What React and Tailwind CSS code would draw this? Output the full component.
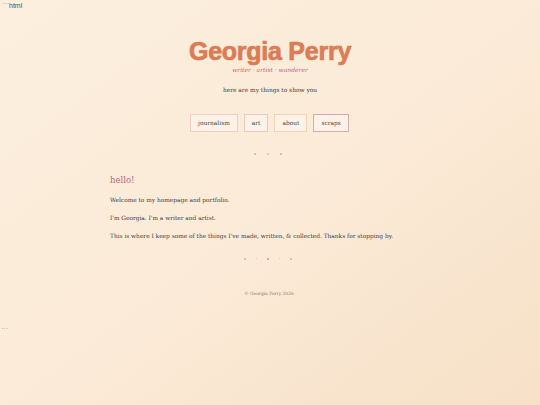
import React from 'react';

const serif = { fontFamily: '"DejaVu Serif", Georgia, serif' };
const sans = { fontFamily: '"Liberation Sans", Arial, sans-serif' };

const links = [
  { label: 'journalism', border: 'border-[#f0cfc8]' },
  { label: 'art', border: 'border-[#e2cbc6]' },
  { label: 'about', border: 'border-[#f3d2b6]' },
  { label: 'scraps', border: 'border-[#d7aab0]' },
];

function Dots({ small }) {
  if (small) {
    return (
      <div className="flex items-center justify-center gap-[10px] h-[6px] mr-[4px]">
        <span className="w-[2px] h-[2px] rounded-full bg-[#cdb3bd]" />
        <span className="w-[1px] h-[1px] rounded-full bg-[#d8c2c6]" />
        <span className="w-[2px] h-[2px] rounded-full bg-[#b89aaa]" />
        <span className="w-[1px] h-[1px] rounded-full bg-[#d8c2c6]" />
        <span className="w-[2px] h-[2px] rounded-full bg-[#cdb3bd]" />
      </div>
    );
  }
  return (
    <div className="flex items-center justify-center gap-[11px] h-[6px] mr-[4px]">
      <span className="w-[2px] h-[2px] rounded-full bg-[#c7aeb8]" />
      <span className="w-[2px] h-[2px] rounded-full bg-[#d6c0c4]" />
      <span className="w-[2px] h-[2px] rounded-full bg-[#c7aeb8]" />
    </div>
  );
}

export default function App() {
  return (
    <div className="w-[540px] h-[405px] overflow-hidden bg-gradient-to-br from-[#fcefde] via-[#fbebd8] to-[#f7e0c7] text-[#3f3a3a]">
      <div className="text-[7px] leading-[10px] text-[#555] pl-[2px] pt-[1px]" style={sans}>
        <span className="text-[#888]">```</span>html
      </div>

      <header className="flex flex-col items-center mt-[26px]">
        <h1
          className="text-[25px] leading-[28px] font-bold text-[#dc7c54] tracking-[-0.25px] [-webkit-text-stroke:0.7px_#dc7c54]"
          style={sans}
        >
          Georgia Perry
        </h1>
        <p className="mt-[1px] text-[6px] leading-[8px] italic text-[#c4627c]" style={serif}>
          writer · artist · wanderer
        </p>
        <p className="mt-[12px] text-[5.9px] leading-[9px] text-[#3f3a3a]" style={serif}>
          here are my things to show you
        </p>
        <nav className="flex gap-[6px] mt-[19px] mr-[1px]">
          {links.map((l) => (
            <a
              key={l.label}
              className={`h-[18px] px-[7px] flex items-center border ${l.border} bg-[#fcf2e8] text-[5.9px] text-[#4a4242]`}
              style={serif}
            >
              {l.label}
            </a>
          ))}
        </nav>
        <div className="mt-[19px]">
          <Dots />
        </div>
      </header>

      <main className="w-[320px] mx-auto mt-[17px]" style={serif}>
        <h2 className="text-[8.5px] leading-[12px] text-[#c4627c]">hello!</h2>
        <p className="mt-[10px] text-[5.85px] leading-[9px]">Welcome to my homepage and portfolio.</p>
        <p className="mt-[9px] text-[5.85px] leading-[9px]">I'm Georgia. I'm a writer and artist.</p>
        <p className="mt-[8.5px] text-[5.85px] leading-[9px]">
          This is where I keep some of the things I've made, written, &amp; collected. Thanks for stopping by.
        </p>
      </main>

      <div className="mt-[15px]">
        <Dots small />
      </div>

      <footer className="mt-[28px] text-center text-[4.4px] leading-[7px] text-[#8a7a72] mr-[2px]" style={serif}>
        © Georgia Perry 2026
      </footer>

      <div className="mt-[29px] text-[7px] leading-[10px] text-[#888] pl-[1px]" style={sans}>
        ```
      </div>
    </div>
  );
}
